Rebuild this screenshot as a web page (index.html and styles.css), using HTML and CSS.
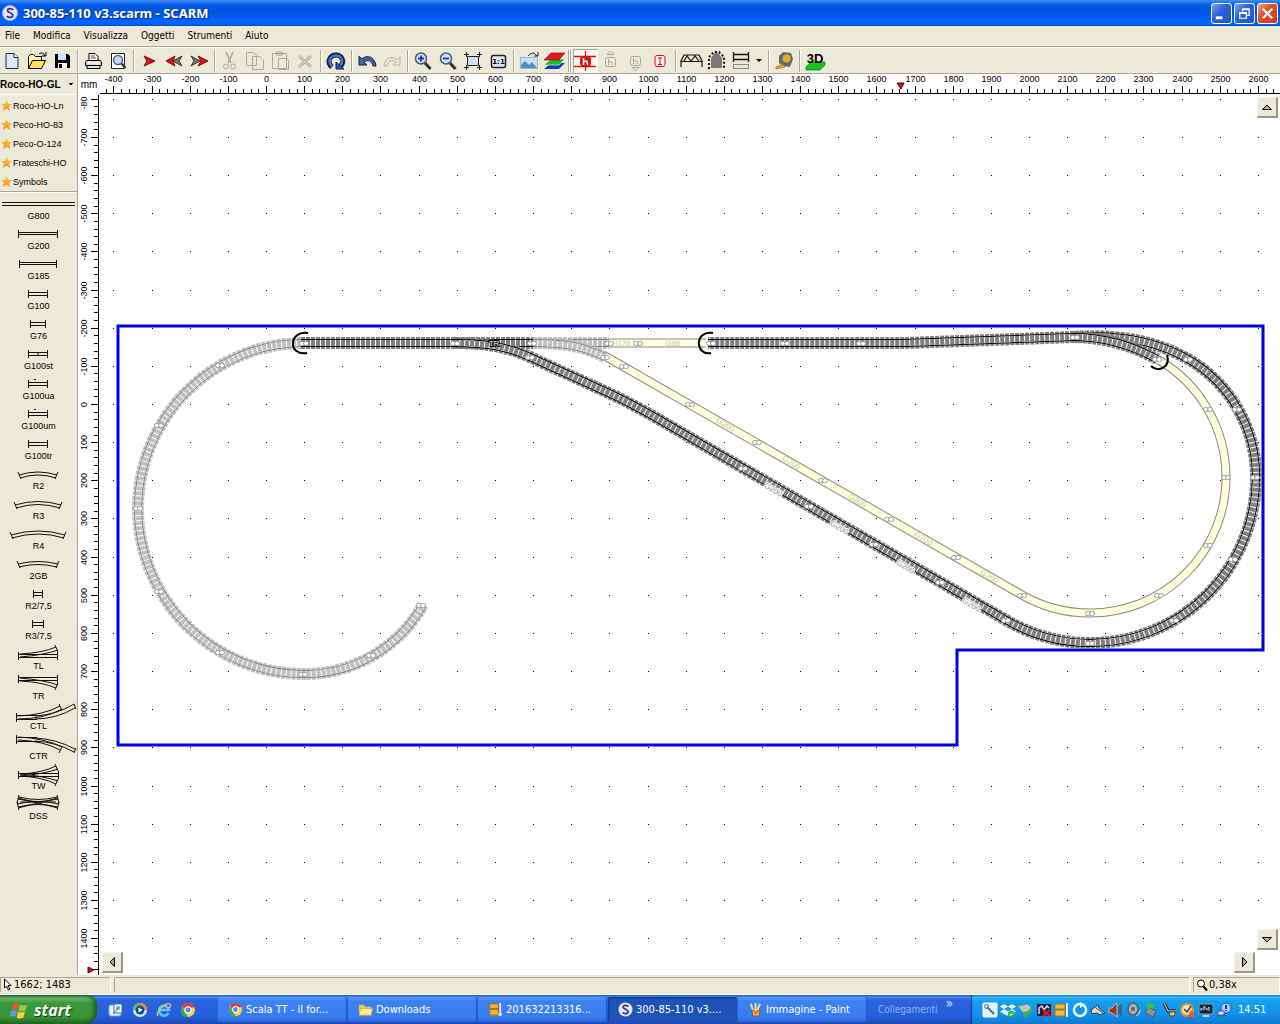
FILE: index.html
```html
<!DOCTYPE html>
<html lang="it">
<head>
<meta charset="utf-8">
<title>300-85-110 v3.scarm - SCARM</title>
<link rel="stylesheet" href="styles.css">
</head>
<body>
<header class="titlebar">
  <svg class="app-icon" viewBox="0 0 16 16"><circle cx="8" cy="8" r="7.5" fill="#e4e4f4" stroke="#a9b4d8"/><path d="M11 5C10 3 5.500 3.200 5.500 5.500C5.500 8 10.800 7.500 10.800 10.200C10.800 13 6 13 5 11" fill="none" stroke="#35358c" stroke-width="1.800"/></svg>
  <h1 class="title">300-85-110 v3.scarm - SCARM</h1>
  <div class="window-buttons">
    <button class="win" aria-label="Riduci a icona"><svg viewBox="0 0 20 20"><path d="M4 13h7v3h-7z" fill="#fff"/></svg></button>
    <button class="win" aria-label="Ripristina"><svg viewBox="0 0 20 20"><path d="M8 8V5h7v7h-3M8 6h7M5 9h7v6H5zM5 10h7" fill="none" stroke="#fff" stroke-width="1.300"/></svg></button>
    <button class="win close" aria-label="Chiudi"><svg viewBox="0 0 20 20"><path d="M5 5l10 10M15 5L5 15" stroke="#fff" stroke-width="2.200"/></svg></button>
  </div>
</header>
<nav class="menubar">
  <button>File</button><button>Modifica</button><button>Visualizza</button><button>Oggetti</button><button>Strumenti</button><button>Aiuto</button>
</nav>
<div class="toolbar" role="toolbar">
  <button aria-label="Nuovo"><svg viewBox="0 0 24 24"><path d="M6 4.500h8l4 4v11H6z" fill="#dbe8fb" stroke="#1b2c4c"/><path d="M14 4.500v4h4" fill="#fff" stroke="#1b2c4c"/></svg></button>
  <button aria-label="Apri"><svg viewBox="0 0 24 24"><path d="M3.500 19.500V7.500l2-2h3l2 2h6v4" fill="#fff3a0" stroke="#000"/><path d="M3.500 19.500l4-8h13l-4 8z" fill="#ffe25a" stroke="#000"/><path d="M14 5q4-3 6 2M21 3v4h-4" fill="none" stroke="#000"/></svg></button>
  <button aria-label="Salva"><svg viewBox="0 0 24 24"><path d="M5 5h13l2 2v12H5z" fill="#000"/><path d="M8 5h8v6H8z" fill="#cde4f8"/><path d="M8 14h9v5H8z" fill="#fff"/><path d="M9 15h3v4H9z" fill="#000"/></svg></button>
  <span class="sep"></span>
  <button aria-label="Stampa"><svg viewBox="0 0 24 24"><path d="M8 11V4.500h6l3 3V11" fill="#fff" stroke="#000"/><path d="M10 7h4M10 9h5" stroke="#555"/><path d="M5.500 11.500h14l1 2v3h-16v-3zM6 16.500h13v3H6z" fill="#d9d9d9" stroke="#000"/><path d="M7 14h11" stroke="#fff"/></svg></button>
  <button aria-label="Anteprima di stampa"><svg viewBox="0 0 24 24"><path d="M5.500 4.500h13v15h-13z" fill="#fff" stroke="#222"/><circle cx="12" cy="11" r="4.500" fill="#c4dafa" stroke="#56617a" stroke-width="1.500"/><path d="M15.500 14.500l4 4.500" stroke="#333" stroke-width="2.500"/></svg></button>
  <span class="sep"></span>
  <button aria-label="Avanti"><svg viewBox="0 0 24 24"><path d="M7 7l11 5-11 5 3-5z" fill="#e51515" stroke="#7a0909"/></svg></button>
  <button aria-label="Indietro"><svg viewBox="0 0 24 24"><path d="M20 7l-9 5 9 5-3-5z" fill="#777" stroke="#333"/><path d="M13 7L4 12l9 5-2-5z" fill="#e51515" stroke="#7a0909"/></svg></button>
  <button aria-label="Fine"><svg viewBox="0 0 24 24"><path d="M4 7l9 5-9 5 3-5z" fill="#777" stroke="#333"/><path d="M11 7l10 5-10 5 3-5z" fill="#e51515" stroke="#7a0909"/></svg></button>
  <span class="sep"></span>
  <button aria-label="Taglia" disabled><svg viewBox="0 0 24 24"><path d="M8 3l5 11M15 3l-5 11" fill="none" stroke="#aca899" stroke-width="1.500"/><circle cx="8" cy="17.500" r="2.500" fill="none" stroke="#aca899"/><circle cx="15" cy="17.500" r="2.500" fill="none" stroke="#aca899"/></svg></button>
  <button aria-label="Copia" disabled><svg viewBox="0 0 24 24"><path d="M3.500 3.500h7l3 3v10h-10z M9.500 7.500h7l4 4v9h-11z" fill="#ece9d8" stroke="#aca899"/></svg></button>
  <button aria-label="Incolla" disabled><svg viewBox="0 0 24 24"><path d="M4.500 4.500h14v15h-14zM8.500 3h6v3h-6z M10.500 9.500h8l2 2v9h-10z" fill="#ece9d8" stroke="#aca899"/></svg></button>
  <button aria-label="Elimina" disabled><svg viewBox="0 0 24 24"><path d="M6 7l12 11M18 7L6 18" stroke="#aca899" stroke-width="3"/><path d="M6 7l12 11M18 7L6 18" stroke="#ece9d8"/></svg></button>
  <span class="sep"></span>
  <button aria-label="Ruota"><svg viewBox="0 0 24 24"><path d="M8 18C2 13 6 6 12 6s9 7 4.500 11" fill="none" stroke="#10204d" stroke-width="5"/><path d="M8 17.500C3 13 6.500 6.500 12 6.500s8 6 4 10.500" fill="none" stroke="#4a70c4" stroke-width="2.600"/><path d="M12 13v7h8z" fill="#34539c" stroke="#10204d"/></svg></button>
  <span class="sep"></span>
  <button aria-label="Annulla"><svg viewBox="0 0 24 24"><path d="M4 7v9h8l-3-3c4-3 8-1 9 4h3C20 8 12 5 7 10z" fill="#41639f" stroke="#13244e"/></svg></button>
  <button aria-label="Ripeti" disabled><svg viewBox="0 0 24 24"><path d="M20 8v8h-7l3-3c-4-3-8-1-9 4H4c1-8 8-11 13-6z" fill="#ece9d8" stroke="#b8b4a5"/></svg></button>
  <span class="sep"></span>
  <button aria-label="Zoom avanti"><svg viewBox="0 0 24 24"><circle cx="10" cy="9.500" r="5.500" fill="#cfe0fa" stroke="#4d5a78" stroke-width="1.500"/><path d="M7 9.500h6M10 6.500v6" stroke="#1736b8" stroke-width="1.800"/><path d="M14 14l5.500 6" stroke="#333" stroke-width="3"/></svg></button>
  <button aria-label="Zoom indietro"><svg viewBox="0 0 24 24"><circle cx="10" cy="9.500" r="5.500" fill="#cfe0fa" stroke="#4d5a78" stroke-width="1.500"/><path d="M7 9.500h6" stroke="#1736b8" stroke-width="1.800"/><path d="M14 14l5.500 6" stroke="#333" stroke-width="3"/></svg></button>
  <button aria-label="Adatta"><svg viewBox="0 0 24 24"><path d="M6.500 7.500h11v9h-11z" fill="#cfe0f5" stroke="#222"/><path d="M3 5.500h18M5.500 3v18M18.500 3v18M3 18.500h18" stroke="#222" stroke-dasharray="5 8 5 0"/></svg></button>
  <button aria-label="Scala 1:1"><svg viewBox="0 0 24 24"><rect x="5.500" y="6.500" width="14" height="12" rx="2" fill="#dbe8fb" stroke="#222" stroke-width="1.500"/><text x="12.500" y="15" text-anchor="middle" class="mini">1:1</text></svg></button>
  <span class="sep"></span>
  <button aria-label="Sfondo"><svg viewBox="0 0 24 24"><path d="M3.500 8.500h17v11h-17z" fill="#c6e0f7" stroke="#9bb5cc"/><path d="M4 19v-3l4-4 4 4 3-3 5 6z" fill="#5a8ab8"/><path d="M11 7q5-6 9 0M21 3v4h-4" fill="none" stroke="#222"/></svg></button>
  <button aria-label="Livelli"><svg viewBox="0 0 24 24"><path d="M2 20l7-6h14l-6 6z" fill="#153fb8"/><path d="M2 16l7-6h14l-6 6z" fill="#19bd25" stroke="#fff" stroke-width=".6"/><path d="M2 11l7-7h14l-6 7z" fill="#e01b1b" stroke="#7a0909" stroke-width=".6"/></svg></button>
  <span class="sep double"></span>
  <button class="pressed" aria-label="Altezze" aria-pressed="true"><svg viewBox="0 0 24 24"><path d="M1 7.500h22M1 17.500h22M12.500 2v20" stroke="#e01010" stroke-width="1.300"/><rect x="7" y="8" width="11" height="9" rx="2" fill="#e01010"/><path d="M10.500 9v7M11 13q3.500-3 3.500 3" stroke="#fff" stroke-width="1.600" fill="none"/></svg></button>
  <button aria-label="Alza" disabled><svg viewBox="0 0 24 24"><rect x="7.500" y="8.500" width="10" height="9" rx="2" fill="none" stroke="#aca899"/><path d="M10.500 10v6M11 13q3-2 3.500 3M9 5.500h7L12.500 2z" stroke="#aca899" fill="none"/></svg></button>
  <button aria-label="Abbassa" disabled><svg viewBox="0 0 24 24"><rect x="7.500" y="7.500" width="10" height="9" rx="2" fill="none" stroke="#aca899"/><path d="M10.500 9v6M11 12q3-2 3.500 3M9 18.500h7L12.500 22z" stroke="#aca899" fill="none"/></svg></button>
  <button aria-label="Azzera altezze"><svg viewBox="0 0 24 24"><rect x="7" y="6.500" width="10" height="11" rx="2" fill="#ffeeee" stroke="#e01010"/><path d="M10 9h4M10 15.500h4M12 9v6" stroke="#e01010"/></svg></button>
  <span class="sep"></span>
  <button aria-label="Ponte"><svg viewBox="0 0 24 24"><path d="M2 12.500h21M2 18v-6l3-6h15l3 6v6M5 12l3-5 4 5 4-5 4 5" fill="none" stroke="#111" stroke-width="1.200"/></svg></button>
  <button aria-label="Galleria"><svg viewBox="0 0 24 24"><path d="M7 19V9l4-5h3l4 5v10z" fill="#777"/><path d="M5 20V8l5-5h5l5 5v12" fill="none" stroke="#111" stroke-width="2" stroke-dasharray="2 2"/></svg></button>
  <button class="wide" aria-label="Tipo di binario"><svg viewBox="0 0 24 24"><path d="M4 5.500h16M4 10.500h16M4.500 3v10M19.500 3v10" stroke="#111" stroke-width="1.300"/><path d="M4 15.500h16M4 19.500h16M4.500 15v5M19.500 15v5" stroke="#888"/></svg><i class="caret"></i></button>
  <span class="sep"></span>
  <button aria-label="Misura"><svg viewBox="0 0 24 24"><path d="M7 7l4-4 8 1 2 6-3 8-7-1-4-3z" fill="#606a72"/><circle cx="14.500" cy="9.500" r="4" fill="#e4ad30"/><path d="M11 15l-7 3v2l9-2z" fill="#e4ad30" stroke="#775b1c" stroke-width=".6"/></svg></button>
  <span class="sep"></span>
  <button aria-label="Vista 3D"><svg viewBox="0 0 24 24"><path d="M3 18l5-5h14v3l-5 5H3z" fill="#11c81e" stroke="#0b7013" stroke-width=".7"/><text x="12" y="14" text-anchor="middle" class="three">3D</text></svg></button>
</div>
<main class="workspace">
  <aside class="library">
    <label class="visually-hidden" for="lib">Libreria</label>
    <select id="lib" class="combo"><option>Roco-HO-GL</option></select>
    <ul class="favorites">
      <li><a href="#lib">Roco-HO-Ln</a></li><li><a href="#lib">Peco-HO-83</a></li><li><a href="#lib">Peco-O-124</a></li><li><a href="#lib">Frateschi-HO</a></li><li><a href="#lib">Symbols</a></li>
    </ul>
    <div class="palette">
      <button><svg><path d="M2 8.500h73M2 11.500h73"/></svg>G800</button>
      <button><svg><path d="M18 8.500h40M18 10.500h40M18.500 6v8M57.500 6v8"/></svg>G200</button>
      <button><svg><path d="M19 8.500h38M19 10.500h38M19.500 6v8M56.500 6v8"/></svg>G185</button>
      <button><svg><path d="M28 8.500h20M28 11.500h20M28.500 6v8M47.500 6v8"/></svg>G100</button>
      <button><svg><path d="M30 8.500h16M30 11.500h16M30.500 6v8M45.500 6v8"/></svg>G76</button>
      <button><svg><path d="M28 8.500h20M28 11.500h20M28.500 6v8M47.500 6v8M38 8v4"/></svg>G100st</button>
      <button><svg><path d="M28 8.500h20M28 11.500h20M28.500 6v8M47.500 6v8M34 5.500h2"/></svg>G100ua</button>
      <button><svg><path d="M28 8.500h20M28 11.500h20M28.500 6v8M47.500 6v8M34 5.500h2"/></svg>G100um</button>
      <button><svg><path d="M28 8.500h20M28 11.500h20M28.500 6v8M47.500 6v8"/></svg>G100tr</button>
      <button><svg><path d="M19 11Q38 5 57 11M20 14Q38 8 56 14M18 8l3 7M58 8l-3 7"/></svg>R2</button>
      <button><svg><path d="M15 11Q38 4 61 11M16 14Q38 7 60 14M14 8l3 7M62 8l-3 7"/></svg>R3</button>
      <button><svg><path d="M11 11Q38 3 65 11M12 14Q38 6 64 14M10 8l3 7M66 8l-3 7"/></svg>R4</button>
      <button><svg><path d="M18 10Q38 5 58 10M19 13Q38 8 57 13M17 7l3 7M59 7l-3 7"/></svg>2GB</button>
      <button><svg><path d="M33 8.500h10M33 11.500h10M33.500 6v8M42.500 6v8"/></svg>R2/7,5</button>
      <button><svg><path d="M32 8.500h12M32 11.500h12M32.500 6v8M43.500 6v8"/></svg>R3/7,5</button>
      <button><svg><path d="M18 10.500h40M18 13.500h40M18.500 8v8M57.500 8v8M20 10Q42 9 56 3M20 13Q44 11 58 6M55 1l3 7"/></svg>TL</button>
      <button><svg><path d="M18 3.500h40M18 6.500h40M18.500 1v8M57.500 1v8M20 7Q42 8 56 14M20 4Q44 6 58 11M58 9l-3 7"/></svg>TR</button>
      <button><svg><path d="M17 11.500h20M17 15.500h20M16.500 9v9M18 12Q44 11 60 2M18 15Q44 15 62 5M35 12Q56 11 74 0M35 15Q56 15 75 4M59 0l3 6M74 0l2 5"/></svg>CTL</button>
      <button><svg><path d="M17 3.500h20M17 7.500h20M16.500 1v9M18 6Q44 7 60 16M18 3Q44 4 62 13M35 4Q56 5 75 15M35 7Q56 8 74 18M62 13l-3 6M76 14l-2 5"/></svg>CTR</button>
      <button><svg><path d="M18 9.500h40M18 12.500h40M18.500 7v8M58.500 7v8M20 10Q42 9 56 2M20 12Q44 10 58 5M55 0l3 7M20 12Q42 13 56 20M20 10Q44 12 58 17M58 15l-3 7"/></svg>TW</button>
      <button><svg><path d="M18 5Q38 10 58 5M19 3Q38 8 57 3M18 13Q38 8 58 13M17 10Q38 5 59 10M18 4L58 14M18 14L58 4M20 8h36M19 1l-2 8M57 1l2 8M17 8l2 8M59 8l-2 8"/></svg>DSS</button>
    </div>
  </aside>
  <div class="unit">mm</div>
  <svg class="ruler-h" id="ruler-h"></svg>
  <svg class="ruler-v" id="ruler-v"></svg>
  <div class="canvas">
    <svg id="plan">
      <g transform="translate(-100 -95)">
        <g id="grid"></g>
        <path class="board" d="M118 326H1263V488V650H957V745H118Z"/>
        <g id="tracks"></g>
        <g id="joints"></g>
        <g class="portal">
          <path d="M308 333C289 330 287 356 307 353"/>
          <path d="M713 333C694 330 695 356 711 353"/>
          <path d="M1151 366C1158 373 1171 367 1167 355"/>
        </g>
      </g>
    </svg>
    <button class="scroll up" aria-label="Su"><svg viewBox="0 0 18 18"><path d="M4.500 11.500h9l-4.500-4.500z"/></svg></button>
    <button class="scroll down" aria-label="Giù"><svg viewBox="0 0 18 18"><path d="M4.500 7.500h9l-4.500 4.500z"/></svg></button>
    <button class="scroll left" aria-label="Sinistra"><svg viewBox="0 0 18 18"><path d="M11.500 4.500v9l-4.500-4.500z"/></svg></button>
    <button class="scroll right" aria-label="Destra"><svg viewBox="0 0 18 18"><path d="M7.500 4.500v9l4.500-4.500z"/></svg></button>
  </div>
</main>
<footer class="statusbar">
  <div class="cell coords"><svg viewBox="0 0 10 14"><path d="M1.500 1v9l2-2 2 4 1.500-1-2-3.500h3z" fill="#fff" stroke="#000"/></svg>1662; 1483</div>
  <div class="cell grow"></div>
  <div class="cell zoom"><svg viewBox="0 0 12 14"><circle cx="5" cy="5.500" r="3.500" fill="#fff" stroke="#000"/><path d="M7.500 8.500l3.500 4" stroke="#000" stroke-width="2"/></svg>0,38x</div>
</footer>
<div class="taskbar">
  <button class="start"><svg viewBox="0 0 20 20"><path d="M3 4q3-2 6 0l-1.500 6q-3-2-6 0z" fill="#f0562c"/><path d="M10 4.500q3 2 7 0l-1.500 6q-4 2-7 0z" fill="#8fd03c"/><path d="M1 11q3-2 6 0l-1.500 6q-3-2-5.500 0z" fill="#5c9bf5"/><path d="M8 11.500q3 2 7 0l-1.500 6q-4 2-7 0z" fill="#fbd13c"/></svg>start</button>
  <div class="quick">
    <button aria-label="Desktop"><svg viewBox="0 0 16 16"><rect x="1" y="3" width="12" height="11" rx="2" fill="#e9f3fd" stroke="#6fa9dc"/><path d="M6 2h8v9H6z" fill="#fff" stroke="#2e6fa8"/><path d="M8 5h4M8 7h4M5 12l6-7" stroke="#2e6fa8"/></svg></button>
    <button aria-label="Media Player"><svg viewBox="0 0 16 16"><circle cx="8" cy="8" r="7" fill="#dbe7f5"/><path d="M8 1a7 7 0 0 1 7 7h-3a4 4 0 0 0-4-4z" fill="#ef8a2b"/><path d="M1 8a7 7 0 0 1 7-7v3a4 4 0 0 0-4 4z" fill="#68b94c"/><circle cx="8" cy="8" r="4.500" fill="#1a4a9c"/><path d="M6.500 5.500v5l4-2.500z" fill="#fff"/></svg></button>
    <button aria-label="Internet Explorer"><svg viewBox="0 0 16 16"><path d="M12.500 11A5 5 0 1 1 13 8H4" fill="none" stroke="#5fc5fa" stroke-width="2.500"/><path d="M2 14C-1 11 9 0 14 2c1.500 1 0 3-1 4" fill="none" stroke="#f3c443" stroke-width="1.300"/></svg></button>
    <button aria-label="Chrome"><svg viewBox="0 0 16 16"><circle cx="8" cy="8" r="7" fill="#fbd03b"/><path d="M2 4.500a7 7 0 0 1 12.500 1H8L5 9z" fill="#e33b2e"/><path d="M1.800 4.800L5.500 11 8 15A7 7 0 0 1 1.800 4.800z" fill="#35a552"/><circle cx="8" cy="8" r="3.200" fill="#4a8af4" stroke="#fff" stroke-width="1.200"/></svg></button>
  </div>
  <div class="tasks">
    <button><svg viewBox="0 0 16 16"><circle cx="8" cy="8" r="7" fill="#fbd03b"/><path d="M2 4.500a7 7 0 0 1 12.500 1H8L5 9z" fill="#e33b2e"/><path d="M1.800 4.800L5.500 11 8 15A7 7 0 0 1 1.800 4.800z" fill="#35a552"/><circle cx="8" cy="8" r="3.200" fill="#4a8af4" stroke="#fff" stroke-width="1.200"/></svg>Scala TT - il for...</button>
    <button><svg viewBox="0 0 16 16"><path d="M1 14V3h5l2 2h6v9z" fill="#f0c646"/><path d="M1 14l2-7h12.500l-1.500 7z" fill="#ffeb8d" stroke="#c89a28" stroke-width=".6"/></svg>Downloads</button>
    <button><svg viewBox="0 0 16 16"><path d="M2 2h9v5H2zM2 8h9v6H2z" fill="#efb62f" stroke="#a87410"/><path d="M13 1v14M11 13h4" stroke="#dedede" stroke-width="2"/></svg>201632213316...</button>
    <button class="active"><svg viewBox="0 0 16 16"><circle cx="8" cy="8" r="7.500" fill="#e4e4f4"/><path d="M11 5C10 3 5.500 3.200 5.500 5.500C5.500 8 10.800 7.500 10.800 10.200C10.800 13 6 13 5 11" fill="none" stroke="#35358c" stroke-width="1.800"/></svg>300-85-110 v3....</button>
    <button><svg viewBox="0 0 16 16"><path d="M4 7h9l-1 8H5z" fill="#e2b171" stroke="#80502c"/><path d="M5 8L3 2M8 8V1M10 8l3-6" stroke="#f6e5a8" stroke-width="2"/><path d="M6 9l3 4M12 8l-3 4" stroke="#b93522"/></svg>Immagine - Paint</button>
  </div>
  <div class="links"><span>Collegamenti</span><button aria-label="Altri collegamenti">»</button></div>
  <div class="tray">
    <svg viewBox="0 0 16 16"><rect x="1" y="1" width="14" height="14" rx="1" fill="#e6f0f7" stroke="#fff"/><path d="M5 5l7 7" stroke="#41759d" stroke-width="2"/><circle cx="4.500" cy="4.500" r="2" fill="none" stroke="#41759d"/></svg>
    <svg viewBox="0 0 16 16"><path d="M4 2l4 2.500L4 7 0 4.500zM12 2l4 2.500L12 7 8 4.500zM4 7l4 2.500L4 12 0 9.500zM12 7l4 2.500L8 14l-4-2z" fill="#f0f8ff"/><circle cx="11.500" cy="12" r="3.500" fill="#36a852"/><path d="M10 12l1 1.500 2-3" stroke="#fff" fill="none"/></svg>
    <svg viewBox="0 0 16 16"><path d="M0 4l10-2 5 6-10 3z" fill="#b9c7c9" stroke="#758487"/><path d="M5 10l3 4 6-8" fill="none" stroke="#3db83d" stroke-width="2.500"/></svg>
    <svg viewBox="0 0 16 16"><path d="M1 2h14v12H1z" fill="#1c1e40"/><path d="M3 12V6l3-2 2 4 3-4 2 2" fill="none" stroke="#d8dcf4" stroke-width="1.500"/><path d="M7 8l7 6M14 8l-7 6" stroke="#e01818" stroke-width="2.500"/></svg>
    <svg viewBox="0 0 16 16"><path d="M1 2h10v5H1zM1 8h10v6H1z" fill="#f2bd35" stroke="#a87410"/><path d="M13 1v14" stroke="#e5e5e5" stroke-width="2"/></svg>
    <svg viewBox="0 0 16 16"><circle cx="8" cy="8" r="6" fill="none" stroke="#e7f7ff" stroke-width="2.500"/><path d="M8 0l5 3-5 3z" fill="#e7f7ff"/></svg>
    <svg viewBox="0 0 16 16"><path d="M1 8l7-5 1 3 6 5-5 2-3-2-5 1z" fill="#dadada" stroke="#333"/><path d="M6 6l7 5" stroke="#444"/></svg>
    <svg viewBox="0 0 16 16"><path d="M1 6h3l5-5v14L4 11H1z" fill="#913b22" stroke="#e0b09c"/><path d="M11 4v8M13 2v12" stroke="#443"/></svg>
    <svg viewBox="0 0 16 16"><ellipse cx="7" cy="7" rx="5" ry="6" fill="#acb0bb" stroke="#565c69" stroke-width="1.500"/><circle cx="7" cy="7" r="2" fill="#565c69"/><path d="M10 14q4-1 4-6" stroke="#ddd" fill="none"/></svg>
    <svg viewBox="0 0 16 16"><path d="M4 5l8 4-3 6-8-4z" fill="#8b949a" stroke="#4a5359"/><path d="M3 1l7 1-1 5-2-1-3 3-1-3z" fill="#3fc13f"/></svg>
    <svg viewBox="0 0 16 16"><path d="M2 1l4 8h8" fill="none" stroke="#111" stroke-width="3"/><path d="M2 1l4 8h8" fill="none" stroke="#fff"/><path d="M7 10h7l-2 4H8z" fill="#d9d07a" stroke="#444"/></svg>
    <svg viewBox="0 0 16 16"><circle cx="7" cy="8" r="6" fill="#f7e3b8" stroke="#e8932b" stroke-width="2"/><path d="M4 7l3 3 4-6" fill="none" stroke="#444" stroke-width="1.500"/><path d="M11 8l5 7H7z" fill="#f05a1c"/></svg>
    <svg viewBox="0 0 16 16"><path d="M1 2h14v10H1z" fill="#172236" stroke="#8fa1b5"/><path d="M3 9V6l3 2V4l3 4 2-3v4" stroke="#9fe0fb" fill="none"/><path d="M5 14h6" stroke="#c8d0da" stroke-width="2"/></svg>
    <svg viewBox="0 0 16 16"><circle cx="10" cy="6" r="5" fill="#a9c9fb" stroke="#2b59c9"/><path d="M10 3v4M10 8v1" stroke="#1c3fae" stroke-width="2"/><path d="M2 9h6v4H2zM1 14h9" fill="#dce8fa" stroke="#3c5a9c"/></svg>
    <time>14.51</time>
  </div>
</div>
<script src="script.js"></script>
</body>
</html>
```
FILE: styles.css
```css
* { box-sizing: border-box; }
html, body { height: 100%; }
body {
  margin: 0;
  display: flex;
  flex-direction: column;
  overflow: hidden;
  background: #ece9d8;
  color: #000;
  font: 10px/12px "DejaVu Sans Condensed", "Liberation Sans", sans-serif;
}
button { font: inherit; color: inherit; border: 0; padding: 0; margin: 0; background: none; }
svg { display: block; flex: none; }
.visually-hidden { position: absolute; width: 1px; height: 1px; overflow: hidden; clip-path: inset(50%); }

/* title bar */
.titlebar {
  flex: none;
  height: 26px;
  display: flex;
  align-items: center;
  gap: 5px;
  padding: 0 2px;
  background: linear-gradient(#3b8cf5 0, #2a7cf0 2px, #0058e4 5px, #0054e0 12px, #0062fa 20px, #0066ff 24px, #0048c8 26px);
}
.app-icon { width: 16px; height: 16px; }
.title {
  flex: 1;
  margin: 0;
  color: #fff;
  font: bold 13px/20px "Noto Sans", "Open Sans", sans-serif;
  text-shadow: 1px 1px 1px #0a2a80;
}
.window-buttons { display: flex; gap: 2px; }
.win {
  width: 21px;
  height: 21px;
  border: 1px solid #fff;
  border-radius: 3px;
  background: linear-gradient(135deg, #7fa6f4, #2f62dc 40%, #2152cc);
}
.win.close { background: linear-gradient(135deg, #f0a284, #e0512a 40%, #c63a14); }
.win svg { width: 19px; height: 19px; }

/* menu */
.menubar {
  flex: none;
  height: 21px;
  display: flex;
  gap: 13px;
  padding: 0 5px 1px;
  border-bottom: 1px solid #aca899;
}
.toolbar {
  flex: none;
  height: 27px;
  display: flex;
  align-items: center;
  border-top: 1px solid #fff;
  border-bottom: 1px solid #aca899;
}
.toolbar button { width: 25px; height: 24px; flex: none; }
.toolbar svg { width: 24px; height: 24px; }
.toolbar .wide { width: 37px; display: flex; align-items: center; }
.toolbar .pressed { background: #fbfaf5; box-shadow: inset 1px 1px #aca899; }
.sep { flex: none; width: 6px; height: 22px; display: flex; justify-content: center; }
.sep::before, .double::after { content: ""; box-sizing: border-box; width: 2px; background: #aca899; border-right: 1px solid #fff; }
.caret { margin-left: 3px; border: 3px solid transparent; border-top-color: #000; border-bottom: 0; }
.mini { font: bold 7px "DejaVu Sans", sans-serif; }
.three { font: bold 13px "Liberation Sans", sans-serif; }

/* workspace */
.workspace {
  flex: 1;
  min-height: 0;
  display: grid;
  grid-template: 21px minmax(0, 1fr) / 78px 22px minmax(0, 1fr);
  background: #fff;
}
.library {
  grid-row: 1 / 3;
  overflow: hidden;
  background: #ece9d8;
  border-right: 1px solid #aca899;
  font: 9px/12px "Liberation Sans", sans-serif;
}
.combo {
  appearance: none;
  display: block;
  width: 100%;
  height: 21px;
  padding: 0;
  border: 0;
  border-bottom: 1px solid #fff;
  border-radius: 0;
  color: #000;
  font: bold 10px "Liberation Sans", sans-serif;
  background: conic-gradient(from -45deg at 50% 100%, #000 90deg, transparent 0) 68px 9px / 6px 3px no-repeat;
}
.favorites { list-style: none; margin: 0; padding: 1px 0 0 1px; height: 97px; border-bottom: 1px solid #aca899; }
.favorites li { height: 19px; }
.favorites a { display: flex; align-items: center; gap: 1px; height: 19px; color: #000; text-decoration: none; }
.favorites a::before {
  content: "";
  width: 11px;
  height: 11px;
  background: linear-gradient(#ffc933, #f58e1c);
  clip-path: polygon(50% 0, 65% 33%, 100% 37%, 73% 62%, 82% 100%, 50% 80%, 18% 100%, 27% 62%, 0 37%, 35% 33%);
}
.palette { padding-top: 1px; border-top: 1px solid #fff; display: flex; flex-direction: column; }
.palette button { height: 30px; line-height: 12px; padding-bottom: 2px; }
.palette svg { width: 77px; height: 16px; overflow: visible; fill: none; stroke: #111; }
.unit { display: grid; place-items: center; font: 10px/12px "Liberation Sans", sans-serif; }
.ruler-h, .ruler-v, #plan { width: 100%; height: 100%; overflow: hidden; }
.ruler-h text, .ruler-v text { font: 9px "Liberation Sans", sans-serif; text-anchor: middle; }
.canvas { position: relative; min-width: 0; min-height: 0; }
.scroll {
  position: absolute;
  width: 21px;
  height: 21px;
  background: #ece9d8;
  border: 1px solid #f5f3ea;
  border-right: 2px solid #9a9788;
  border-bottom: 2px solid #9a9788;
}
.scroll svg { width: 18px; height: 18px; fill: #b0ac9c; stroke: #000; }
.up { top: 2px; right: 2px; }
.down { bottom: 25px; right: 2px; }
.left { bottom: 2px; left: 2px; }
.right { bottom: 2px; right: 25px; }

/* plan */
.board { fill: none; stroke: #0000dc; stroke-width: 3; }
.ties, .rails, .bed, .sleepers { fill: none; }
.ties { stroke-width: 12; stroke-dasharray: 4 1; }
.rails { stroke-width: 8; }
.bed { stroke: #fff; stroke-width: 6; }
.sleepers { stroke-width: 6; stroke-dasharray: 4 1; }
.dark .ties, .dark .sleepers { stroke: #808080; }
.dark .rails { stroke: #000; }
.light .ties, .light .sleepers { stroke: #c0c0c0; }
.light .rails { stroke: #808080; }
.hidden-track .ties, .hidden-track .sleepers { stroke: none; }
.hidden-track .rails { stroke: #8c8c78; stroke-width: 9; }
.hidden-track .bed { stroke: #ffffe0; stroke-width: 7; }
.joint { fill: #fff; stroke: #999; }
.tag { font: 8px "Liberation Sans", sans-serif; text-anchor: middle; fill: #999; stroke: #fff; stroke-width: 2px; paint-order: stroke; }
.tag.pale { fill: #c8c8b0; stroke: none; }
.tag.strong { fill: #fff; stroke: #000; }
.portal { fill: none; stroke: #000; stroke-width: 2; }

/* status bar */
.statusbar {
  flex: none;
  height: 20px;
  display: flex;
  gap: 3px;
  padding: 2px 0;
  border-bottom: 1px solid #fff;
  font-size: 11px;
}
.cell { display: flex; align-items: center; gap: 1px; padding-left: 2px; border-top: 1px solid #aca899; border-left: 1px solid #aca899; border-right: 1px solid #fff; }
.cell svg { width: 10px; height: 14px; }
.coords { width: 111px; }
.grow { flex: 1; }
.zoom { width: 87px; }
.zoom svg { width: 12px; }

/* taskbar */
.taskbar {
  flex: none;
  height: 29px;
  display: flex;
  align-items: stretch;
  color: #fff;
  background: linear-gradient(#1f4fc0 0, #4a88f0 2px, #2a63dc 5px, #245edb 22px, #1d49b4 29px);
}
.start {
  width: 97px;
  display: flex;
  align-items: center;
  gap: 4px;
  padding-left: 10px;
  border-radius: 0 9px 12px 0;
  background: linear-gradient(#2c6c2c 0, #6ab86a 3px, #3c983c 8px, #379437 22px, #246a24 29px);
  box-shadow: inset -3px 0 4px #1c5c1c;
  font: italic bold 16px/20px "Open Sans", "Noto Sans", sans-serif;
  text-shadow: 1px 1px 1px #123c12;
}
.start svg { width: 20px; height: 20px; }
.quick { display: flex; align-items: center; gap: 7px; padding: 0 21px 0 11px; }
.quick svg { width: 16px; height: 16px; }
.quick button { width: 17px; }
.tasks { display: flex; gap: 1px; padding: 2px 0; font-size: 11px; }
.tasks button {
  width: 129px;
  display: flex;
  align-items: center;
  gap: 3px;
  padding-left: 10px;
  border-radius: 2px;
  background: linear-gradient(#5f9dfa 0, #3c81f3 4px, #3a7cf0 20px, #2f68dc 25px);
  box-shadow: inset -1px 0 1px #2354c4;
}
.tasks .active { background: #1e52b7; box-shadow: inset 1px 1px 2px #123886; }
.tasks svg { width: 15px; height: 15px; }
.links { flex: 1; display: flex; align-items: center; gap: 8px; padding-left: 11px; color: #8fb2f6; }
.links button { align-self: flex-start; color: #d5e3ff; font-size: 14px; line-height: 16px; }
.tray {
  width: 309px;
  display: flex;
  align-items: center;
  gap: 2px;
  padding-left: 10px;
  border-left: 1px solid #0b3a9c;
  background: linear-gradient(#0f6fd0 0, #35b4f8 2px, #14a0ee 6px, #1290ea 20px, #0f78cc 29px);
}
.tray svg { width: 16px; height: 16px; }
.tray time { margin-left: 4px; font-size: 11px; }
```
FILE: script.js
```js
const NS = "http://www.w3.org/2000/svg";
const PX_PER_MM = 0.3815;
const ORIGIN_X = 266.5;
const ORIGIN_Y = 404.5;

function add(parent, name, attrs, text) {
  const node = document.createElementNS(NS, name);
  for (const key in attrs) node.setAttribute(key, attrs[key]);
  if (text !== undefined) node.textContent = text;
  parent.appendChild(node);
  return node;
}

// Rulers: a tick each 20 mm, a longer one with its number each 100 mm
const rulerH = document.getElementById("ruler-h");
const rulerV = document.getElementById("ruler-v");
const spanH = rulerH.getBoundingClientRect().width;
const spanV = rulerV.getBoundingClientRect().height;
let ticksH = "M0 19.5H" + spanH;
let ticksV = "M20.5 0V" + spanV;
for (let mm = -420; ; mm += 20) {
  const x = Math.floor(ORIGIN_X - 100 + mm * PX_PER_MM) + 0.5;
  if (x > spanH) break;
  const major = mm % 100 === 0;
  ticksH += "M" + x + " 20v" + (major ? -8 : -5);
  if (major && x < spanH - 11) add(rulerH, "text", { x: x, y: 8 }, mm);
}
for (let mm = -800; ; mm += 20) {
  const y = Math.floor(ORIGIN_Y - 95 + mm * PX_PER_MM) + 0.5;
  if (y > spanV) break;
  const major = mm % 100 === 0;
  ticksV += "M21 " + y + "h" + (major ? -8 : -5);
  if (major && y < spanV - 11) {
    // the first number has room for its leading digits only
    const first = mm === -800;
    add(rulerV, "text", { transform: "translate(9 " + (first ? 8 : y) + ") rotate(-90)" }, first ? "-80" : mm);
  }
}
add(rulerH, "path", { d: ticksH, stroke: "#000", "stroke-width": 1, fill: "none" });
add(rulerV, "path", { d: ticksV, stroke: "#000", "stroke-width": 1, fill: "none" });
add(rulerH, "path", { d: "M797 9h7l-3 6z", fill: "#d01030", stroke: "#500" });
add(rulerV, "path", { d: "M10 872v6l6-3z", fill: "#d01030", stroke: "#500" });

// Grid points each 100 mm
const grid = document.getElementById("grid");
let points = "";
for (let gx = -400; gx <= 6000; gx += 100) {
  for (let gy = -800; gy <= 4000; gy += 100) {
    points += "M" + Math.floor(ORIGIN_X + gx * PX_PER_MM) + " " + (Math.floor(ORIGIN_Y + gy * PX_PER_MM) + 0.5) + "h1";
  }
}
add(grid, "path", { d: points, stroke: "#000" });

// Tracks, from the lowest level up
const tracks = [
  ["hidden-track", "M608 343H706"],
  ["hidden-track", "M605 356L1022 595A136 136 0 0 0 1090 613A136 136 0 0 0 1226 477A136 136 0 0 0 1157 359"],
  ["light", "M301 343A166 166 0 0 0 138 508A166 166 0 0 0 303 674A136 136 0 0 0 423 605"],
  ["light", "M533 343H609"],
  ["light", "M533 343C565 343 582 346 605 357"],
  ["dark", "M301 343H533"],
  ["dark", "M455 343C490 343 510 348 530 357L600 389C625 400 650 414 672 427L1006 620A166 166 0 0 0 1090 643A166 166 0 0 0 1256 477A136 136 0 0 0 1188 359C1155 340 1115 334 1073 337L905 343H708"],
  ["dark", "M1073 337C1105 337 1135 347 1157 359"]
];
const layer = document.getElementById("tracks");
for (const [kind, d] of tracks) {
  const g = add(layer, "g", { class: kind });
  for (const part of ["ties", "rails", "bed", "sleepers"]) add(g, "path", { class: part, d: d });
}

// Joints between the pieces
const joints = document.getElementById("joints");
const ends = [
  [304, 343], [220, 365], [159, 425], [138, 508], [159, 591], [220, 652], [303, 674], [371, 655], [421, 605],
  [455, 343], [532, 343], [530, 357], [605, 357], [609, 343], [638, 343], [624, 366], [690, 404], [757, 442],
  [823, 480], [889, 519], [956, 557], [1022, 595], [1090, 613], [1159, 595], [1208, 545], [1226, 477], [1208, 409],
  [1157, 359], [743, 468], [809, 506], [874, 544], [940, 582], [1006, 620], [1090, 643], [1174, 620], [1233, 559],
  [1255, 477], [1237, 409], [1188, 359], [1075, 337], [711, 343], [785, 343], [861, 343]
];
for (const [x, y] of ends) {
  add(joints, "rect", { class: "joint", x: x - 4.5, y: y - 1.5, width: 5, height: 4, rx: 2 });
  add(joints, "rect", { class: "joint", x: x - 0.5, y: y - 1.5, width: 5, height: 4, rx: 2 });
}
const tags = [[772, 492, "tag"], [838, 530, "tag"], [904, 569, "tag"], [970, 607, "tag"],
  [724, 427, "tag pale"], [790, 465, "tag pale"], [856, 503, "tag pale"], [922, 541, "tag pale"], [988, 579, "tag pale"]];
for (const [x, y, cls] of tags) {
  add(joints, "text", { class: cls, transform: "translate(" + x + " " + y + ") rotate(30)" }, "G200");
}
add(joints, "text", { class: "tag pale", x: 673, y: 346 }, "G88");
add(joints, "text", { class: "tag pale", x: 623, y: 346 }, "G76");
add(joints, "text", { class: "tag strong", x: 494, y: 346 }, "TR");
```
